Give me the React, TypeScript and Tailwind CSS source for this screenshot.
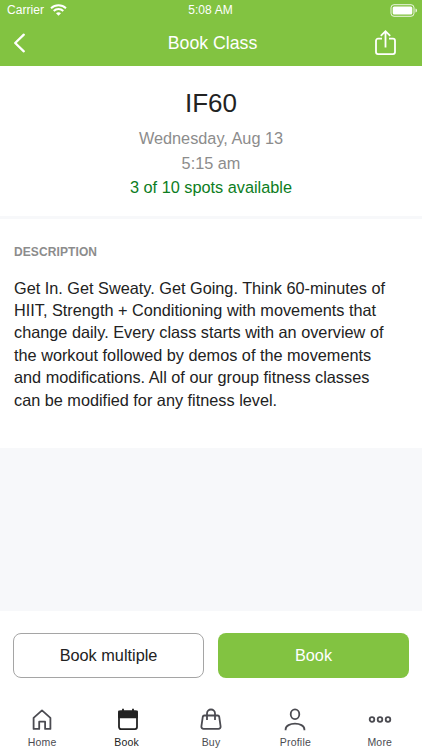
import type { ReactNode } from "react";

const description = [
  "Get In. Get Sweaty. Get Going. Think 60-minutes of",
  "HIIT, Strength + Conditioning with movements that",
  "change daily. Every class starts with an overview of",
  "the workout followed by demos of the movements",
  "and modifications. All of our group fitness classes",
  "can be modified for any fitness level.",
];

function StatusBar() {
  return (
    <div className="grid h-5 grid-cols-3 items-center pr-[4px] pl-[7px] text-[12px] leading-5">
      <div className="flex items-center gap-[6px]">
        <span className="tracking-[0.05px]">Carrier</span>
        <svg width="17" height="12" viewBox="0 0 17 12" fill="none" stroke="currentColor" strokeWidth="1.9">
          <path d="M1 4.200C5.200.2 11.800.2 16 4.200M3.700 7C6.400 4.400 10.600 4.400 13.300 7" />
          <path d="M8.500 11.700 6 9.200c1.400-1.300 3.600-1.300 5 0z" fill="currentColor" stroke="none" />
        </svg>
      </div>
      <span className="pr-[4px] text-center tracking-[0.1px]">5:08 AM</span>
      <svg className="justify-self-end" width="28" height="13" viewBox="0 0 28 13" fill="none">
        <rect x="1" y=".7" width="23" height="11.600" rx="3" stroke="currentColor" strokeOpacity=".85" />
        <rect x="2.700" y="2.400" width="19.600" height="8.200" rx="1.500" fill="currentColor" />
        <path d="M25.500 4.500c2 .6 2 3.400 0 4z" fill="currentColor" fillOpacity=".85" />
      </svg>
    </div>
  );
}

function Header() {
  return (
    <header className="h-[66px] bg-[#82c341] text-white">
      <StatusBar />
      <div className="grid h-[46px] grid-cols-[60px_1fr_60px] items-center">
        <svg className="ml-[12px]" width="16" height="22" viewBox="0 0 16 22" fill="none" stroke="currentColor" strokeWidth="2.300">
          <path d="M11.800 2.700 3.200 11l8.600 8.300" strokeLinecap="round" strokeLinejoin="round" />
        </svg>
        <h1 className="pl-[3px] text-center text-[17.700px] leading-[22px]">Book Class</h1>
        <svg className="ml-[12px]" width="24" height="28" viewBox="0 0 24 28" fill="none" stroke="currentColor" strokeWidth="1.800">
          <path d="M8 9.700H4a2 2 0 0 0-2 2v11.400a2 2 0 0 0 2 2h15a2 2 0 0 0 2-2V11.700a2 2 0 0 0-2-2h-4" />
          <path d="M11.500 18.500V2.500M6.800 6.800l4.700-4.600 4.700 4.600" />
        </svg>
      </div>
    </header>
  );
}

function NavItem({ label, active = false, children }: { label: string; active?: boolean; children: ReactNode }) {
  return (
    <a className={`flex flex-col items-center ${active ? "text-[#222]" : "text-[#4b4b51]"}`}>
      <svg width="24" height="26" viewBox="0 0 24 26" fill="none" stroke="currentColor" strokeWidth="1.800">
        {children}
      </svg>
      <span className="mt-[4px] text-[10.500px] leading-[13px] tracking-[0.2px]">{label}</span>
    </a>
  );
}

export default function App() {
  return (
    <div className="flex h-[750px] w-[422px] flex-col overflow-hidden bg-[#f7f8fa] font-['Liberation_Sans',Arial,sans-serif] text-[#222]">
      <Header />
      <section className="h-[150px] bg-white pt-[22px] text-center text-[16.300px]">
        <h2 className="text-[26px] leading-[30px]">IF60</h2>
        <div className="mt-[8px] leading-[24.500px] text-[#8c8c8c]">
          <p>Wednesday, Aug 13</p>
          <p>5:15 am</p>
          <p className="text-[#0c7d22]">3 of 10 spots available</p>
        </div>
      </section>
      <section className="mt-[3px] h-[229px] bg-white px-[14px] pt-[26px]">
        <h3 className="text-[12px] leading-[15px] font-bold tracking-[0.1px] text-[#8c8c8c]">DESCRIPTION</h3>
        <p className="mt-[16.500px] text-[16.270px] leading-[22.400px] whitespace-nowrap">
          {description.map((line) => (
            <span key={line} className="block">{line}</span>
          ))}
        </p>
      </section>
      <footer className="mt-auto h-[139px] bg-white">
        <div className="grid grid-cols-2 gap-[14px] px-[13px] pt-[22px] text-[16.300px]">
          <button className="h-[45px] rounded-[8px] border border-[#a5a5a5]">Book multiple</button>
          <button className="h-[45px] rounded-[8px] bg-[#82c341] text-white">Book</button>
        </div>
        <nav className="mt-[28px] grid grid-cols-5">
          <NavItem label="Home">
            <path d="M3.600 11.900 12 4.400l8.400 7.500v11h-5.300v-7.200H9.200v7.200H3.600z" strokeLinejoin="round" />
          </NavItem>
          <NavItem label="Book" active>
            <rect x="4" y="5.300" width="18" height="17.800" rx="2" />
            <path d="M4 5.300h18v6H4z" fill="currentColor" strokeLinejoin="round" />
            <path d="M8 2.800v3M18 2.800v3" />
          </NavItem>
          <NavItem label="Buy">
            <path d="M5.300 9.500h13.400a1.500 1.500 0 0 1 1.500 1.200l1.400 9.600a2.200 2.200 0 0 1-2.200 2.600H4.600a2.200 2.200 0 0 1-2.200-2.600l1.400-9.600a1.500 1.500 0 0 1 1.500-1.200z" />
            <path d="M8 14V7.500a4 4 0 0 1 8 0V14" />
          </NavItem>
          <NavItem label="Profile">
            <ellipse cx="12" cy="8.200" rx="4.300" ry="4.900" />
            <path d="M2.600 24.300v-.8c0-7.800 18.800-7.800 18.800 0v.8" />
          </NavItem>
          <NavItem label="More">
            <circle cx="4" cy="13.500" r="2.300" />
            <circle cx="12" cy="13.500" r="2.300" />
            <circle cx="20" cy="13.500" r="2.300" />
          </NavItem>
        </nav>
      </footer>
    </div>
  );
}
